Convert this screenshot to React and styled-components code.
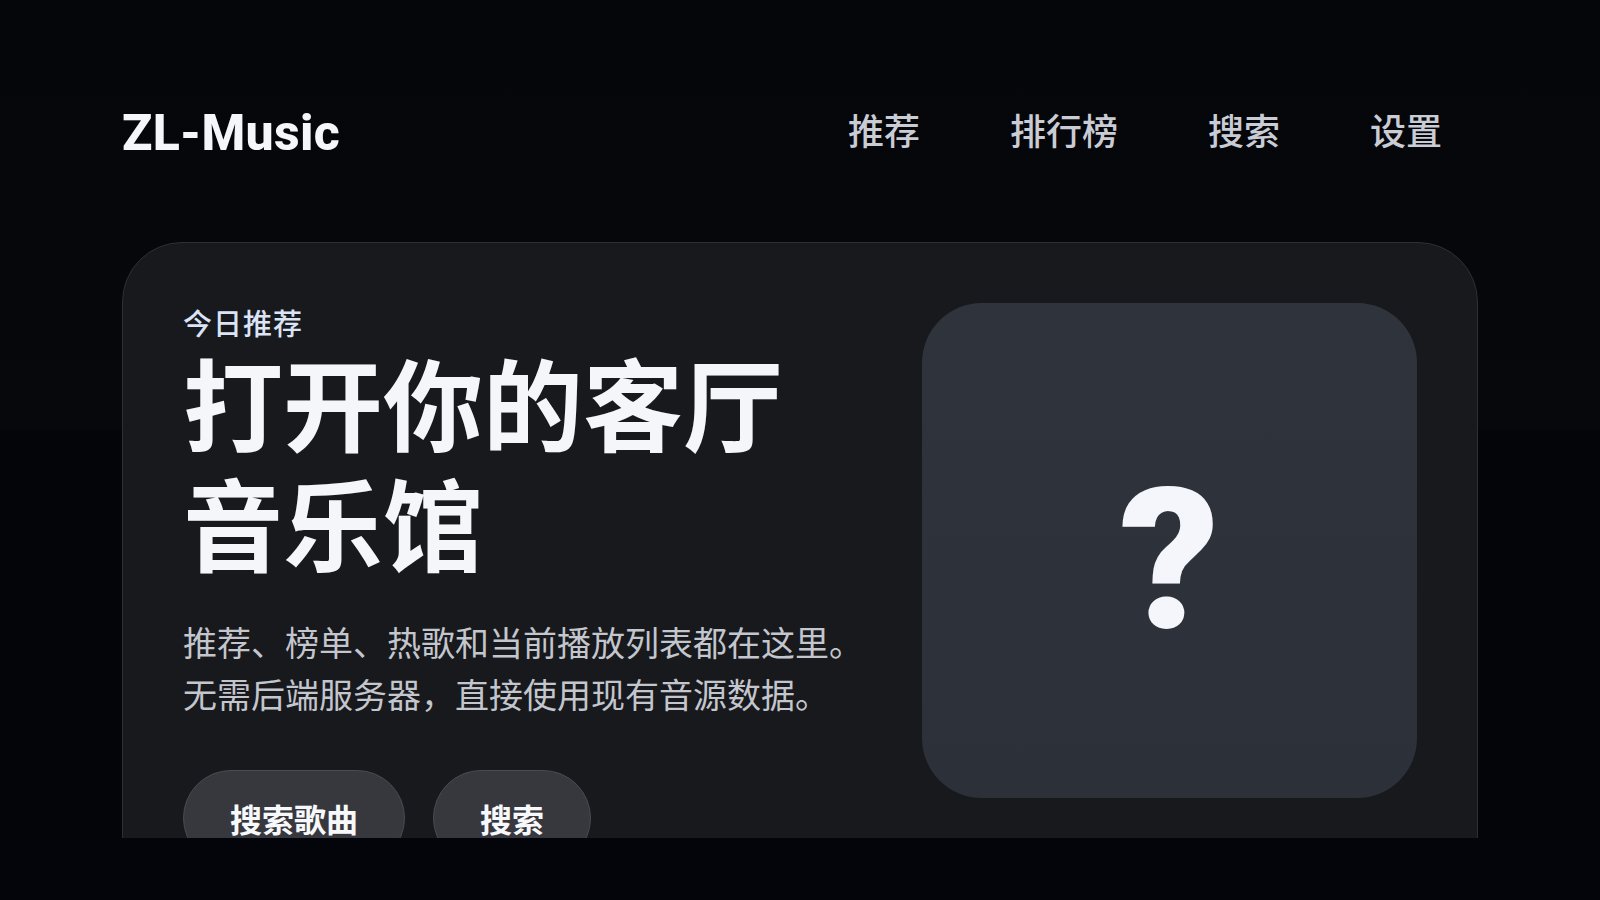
import React from 'react';
import styled, { createGlobalStyle } from 'styled-components';

const GlobalStyle = createGlobalStyle`
  * { box-sizing: border-box; }
  html, body { margin: 0; padding: 0; }
  body {
    background: #05060a;
    font-family: Roboto, "Noto Sans CJK SC", sans-serif;
    color: #f5f6fa;
  }
`;

const Page = styled.div`
  display: flex;
  flex-direction: column;
  height: 100vh;
  background: linear-gradient(180deg, #05060a 0px, #07080c 428px, #040509 432px, #040509 100%);
`;

const Main = styled.main`
  flex: 1;
  overflow: hidden;
`;

const Wrap = styled.div`
  width: 1356px;
  margin: 0 auto;
`;

const Header = styled.header`
  display: flex;
  justify-content: space-between;
  align-items: center;
  height: 66px;
  margin-top: 100px;
  margin-bottom: 76px;
`;

const Logo = styled.div`
  font-family: Roboto, sans-serif;
  font-weight: 800;
  font-size: 50px;
  letter-spacing: 0.3px;
  color: #f5f6fa;
`;

const Nav = styled.nav`
  display: flex;
  gap: 18px;
  margin-bottom: 8px;
`;

const NavLink = styled.a`
  padding: 8px 36px;
  font-family: "Noto Sans CJK SC", sans-serif;
  font-weight: 500;
  font-size: 36px;
  color: #c9ccd4;
  cursor: pointer;
`;

const Card = styled.section`
  display: grid;
  grid-template-columns: 1fr 495px;
  gap: 60px;
  padding: 60px;
  border: 1px solid #2e2f34;
  border-radius: 60px;
  background: #18191d;
`;

const Intro = styled.div`
  display: flex;
  flex-direction: column;
  min-width: 0;
`;

const Eyebrow = styled.div`
  font-family: "Noto Sans CJK SC", sans-serif;
  font-weight: 500;
  font-size: 29px;
  line-height: 38px;
  letter-spacing: 1px;
  color: #dbe3f6;
`;

const Title = styled.h1`
  margin: 0;
  font-family: "Noto Sans CJK SC", sans-serif;
  font-weight: 700;
  font-size: 100px;
  line-height: 120px;
  color: #f5f6fa;
`;

const Lead = styled.p`
  margin: 35px 0 0;
  font-family: "Noto Sans CJK SC", sans-serif;
  font-weight: 400;
  font-size: 34px;
  line-height: 52px;
  color: #c3c6cd;
  white-space: nowrap;
`;

const Actions = styled.div`
  display: flex;
  gap: 28px;
  margin-top: 50px;
`;

const Button = styled.button`
  height: 96px;
  padding: 0 46px;
  border: 1px solid #4a4b51;
  border-radius: 48px;
  background: #37383d;
  color: #f7f8fb;
  font-family: "Noto Sans CJK SC", sans-serif;
  font-weight: 700;
  font-size: 32px;
  cursor: pointer;
`;

const Cover = styled.div`
  display: flex;
  align-items: center;
  justify-content: center;
  width: 495px;
  height: 495px;
  border-radius: 60px;
  background: linear-gradient(180deg, #2e333c 0%, #2b3039 100%);
`;

const CoverMark = styled.span`
  font-family: Roboto, sans-serif;
  font-weight: 900;
  font-size: 196px;
  line-height: 1;
  color: #f4f6fb;
  transform: translateY(10px);
`;

const PlayerBar = styled.footer`
  height: 62px;
  flex-shrink: 0;
  background: #04050a;
`;

const navItems = ['推荐', '排行榜', '搜索', '设置'];

export default function App() {
  return (
    <Page>
      <GlobalStyle />
      <Main>
        <Wrap>
          <Header>
            <Logo>ZL-Music</Logo>
            <Nav>
              {navItems.map((item) => (
                <NavLink key={item}>{item}</NavLink>
              ))}
            </Nav>
          </Header>
          <Card>
            <Intro>
              <Eyebrow>今日推荐</Eyebrow>
              <Title>打开你的客厅音乐馆</Title>
              <Lead>
                推荐、榜单、热歌和当前播放列表都在这里。
                <br />
                无需后端服务器，直接使用现有音源数据。
              </Lead>
              <Actions>
                <Button>搜索歌曲</Button>
                <Button>搜索</Button>
              </Actions>
            </Intro>
            <Cover>
              <CoverMark>?</CoverMark>
            </Cover>
          </Card>
        </Wrap>
      </Main>
      <PlayerBar />
    </Page>
  );
}
